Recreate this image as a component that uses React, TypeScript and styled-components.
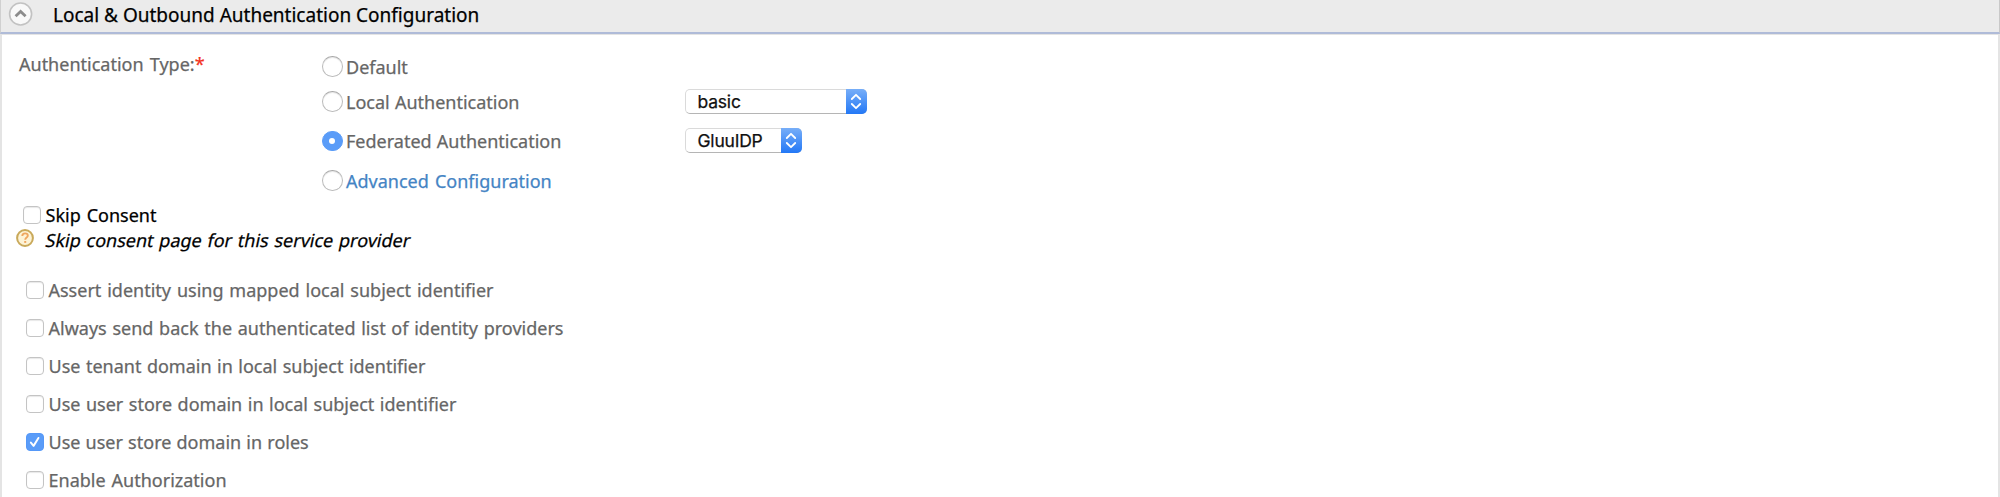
import React from "react";
import styled, { createGlobalStyle } from "styled-components";

const GlobalStyle = createGlobalStyle`
  * { box-sizing: border-box; }
  body {
    margin: 0;
    background: #fff;
    overflow: hidden;
    font-family: "Noto Sans", "Open Sans", sans-serif;
    font-size: 18px;
    color: #666;
    -webkit-text-stroke: 0.25px currentColor;
  }
`;

const Section = styled.section`
  width: 100%;
  height: 497px;
  overflow: hidden;
`;

const SectionHeader = styled.header`
  display: flex;
  align-items: flex-start;
  height: 34px;
  background: #ebebeb;
  border-bottom: 2px solid #afbbd8;
  border-left: 1px solid #d0d0d0;
  border-right: 1px solid #c8c8c8;
`;

const ToggleIcon = styled.svg`
  flex: none;
  width: 26px;
  height: 28px;
  margin-left: 7px;
`;

const SectionTitle = styled.h2`
  margin: 0 0 0 19px;
  font-size: 19px;
  font-weight: 400;
  line-height: 30px;
  color: #000;
  white-space: pre;
`;

const SectionBody = styled.div`
  height: 463px;
  border: solid #e4e4e4;
  border-width: 1px 2px 0;
`;

const AuthType = styled.div`
  display: flex;
  padding-top: 14px;
`;

const FieldLabel = styled.div`
  width: 304px;
  padding-left: 17px;
  line-height: 30px;
  word-spacing: 1.5px;
  white-space: pre;
`;

const Required = styled.span`
  color: #f3301c;
`;

const OptionList = styled.div`
  flex: 1;
`;

const OptionRow = styled.label<{ $height: number }>`
  display: flex;
  align-items: center;
  height: ${(p) => p.$height}px;
  padding-left: 16px;
`;

const Radio = styled.span<{ $checked?: boolean }>`
  display: flex;
  align-items: center;
  justify-content: center;
  flex: none;
  width: 20.5px;
  height: 20.5px;
  border-radius: 50%;
  border: 1px solid ${(p) => (p.$checked ? "#5a9cf8" : "#bdbdbd")};
  border-top-color: ${(p) => (p.$checked ? "#5a9cf8" : "#a9a9a9")};
  background: ${(p) => (p.$checked ? "#5a9cf8" : "#fff")};
  box-shadow: ${(p) => (p.$checked ? "none" : "inset 0 1px 1px #e6e6e6")};

  &::after {
    content: "";
    width: 6px;
    height: 6px;
    border-radius: 50%;
    background: #fff;
  }
`;

const OptionText = styled.span<{ $link?: boolean }>`
  width: 338.5px;
  margin-left: 3.5px;
  word-spacing: ${(p) => (p.$link ? 1.5 : 0.5)}px;
  color: ${(p) => (p.$link ? "#4484c4" : "inherit")};
  white-space: pre;
`;

const SelectBox = styled.span<{ $width: number }>`
  display: flex;
  justify-content: space-between;
  width: ${(p) => p.$width}px;
  height: 25px;
  margin-bottom: 1px;
  border: 1px solid #dadada;
  border-bottom-color: #b5b5b5;
  border-radius: 5px;
  background: #fff;
  font-family: Inter, sans-serif;
  font-size: 17.5px;
  line-height: 24px;
  letter-spacing: -0.2px;
  color: #111;
  padding-left: 12px;
`;

const SelectArrows = styled.span`
  display: flex;
  align-items: center;
  justify-content: center;
  width: 21px;
  height: 25px;
  margin: -1px -1px 0 0;
  border-radius: 0 5px 5px 0;
  background: linear-gradient(#77aef8, #2378f6);
`;

const SkipRow = styled.label`
  display: flex;
  align-items: center;
  height: 24px;
  margin-top: 5px;
  padding-left: 21px;
  color: #000;
`;

const HelpRow = styled.div`
  display: flex;
  align-items: flex-start;
  height: 44px;
  padding-left: 14px;
  line-height: 26px;
  color: #000;
`;

const HelpIcon = styled.svg`
  flex: none;
  width: 18px;
  height: 18px;
  margin: 2px 12px 0 0;
`;

const HelpText = styled.span`
  word-spacing: 1.1px;
  white-space: pre;
  transform: skewX(-12deg);
`;

const CheckRow = styled.label`
  display: flex;
  align-items: center;
  height: 38px;
  padding-left: 24px;
`;

const Checkbox = styled.span<{ $checked?: boolean }>`
  display: flex;
  flex: none;
  width: 17.5px;
  height: 17.5px;
  border-radius: 4px;
  border: 1px solid ${(p) => (p.$checked ? "#5598f8" : "#c4c4c4")};
  background: ${(p) => (p.$checked ? "#5a9cf8" : "#fff")};
  box-shadow: ${(p) => (p.$checked ? "none" : "inset 0 1px 1px #e8e8e8")};
`;

const CheckText = styled.span<{ $spacing: number }>`
  margin-left: 5px;
  word-spacing: ${(p) => p.$spacing}px;
  white-space: pre;
`;

const checks = [
  { label: "Assert identity using mapped local subject identifier", spacing: 1.2 },
  { label: "Always send back the authenticated list of identity providers", spacing: 1.05 },
  { label: "Use tenant domain in local subject identifier", spacing: 0.8 },
  { label: "Use user store domain in local subject identifier", spacing: 0.85 },
  { label: "Use user store domain in roles", spacing: 0.5, checked: true },
  { label: "Enable Authorization", spacing: 1.3 },
];

function Select({ value, width }: { value: string; width: number }) {
  return (
    <SelectBox $width={width}>
      {value}
      <SelectArrows>
        <svg width="12" height="17" viewBox="0 0 12 17" fill="none" stroke="#fff" strokeWidth="1.8" strokeLinecap="round" strokeLinejoin="round">
          <path d="M1.8 6 6 1.8 10.2 6M1.8 11 6 15.2 10.2 11" />
        </svg>
      </SelectArrows>
    </SelectBox>
  );
}

export default function App() {
  return (
    <>
      <GlobalStyle />
      <Section>
        <SectionHeader>
          <ToggleIcon viewBox="0 0 26 28" fill="none">
            <circle cx="12.6" cy="14" r="11" fill="#f9f9f9" stroke="#c2c2c2" strokeWidth="1.6" />
            <path d="M7.6 16.2 12.6 11.4 17.6 16.2" stroke="#8c8c8c" strokeWidth="2.8" />
          </ToggleIcon>
          <SectionTitle>Local &amp; Outbound Authentication Configuration</SectionTitle>
        </SectionHeader>
        <SectionBody>
          <AuthType>
            <FieldLabel>
              Authentication Type:<Required>*</Required>
            </FieldLabel>
            <OptionList>
              <OptionRow $height={35}>
                <Radio />
                <OptionText>Default</OptionText>
              </OptionRow>
              <OptionRow $height={35}>
                <Radio />
                <OptionText>Local Authentication</OptionText>
                <Select value="basic" width={182} />
              </OptionRow>
              <OptionRow $height={44}>
                <Radio $checked />
                <OptionText>Federated Authentication</OptionText>
                <Select value="GluuIDP" width={117} />
              </OptionRow>
              <OptionRow $height={35}>
                <Radio />
                <OptionText $link>Advanced Configuration</OptionText>
              </OptionRow>
            </OptionList>
          </AuthType>
          <SkipRow>
            <Checkbox />
            <CheckText $spacing={1.3}>Skip Consent</CheckText>
          </SkipRow>
          <HelpRow>
            <HelpIcon viewBox="0 0 18 18" fill="none">
              <circle cx="9" cy="9" r="7.9" fill="#fdf3d6" stroke="#c9a95a" strokeWidth="2" />
              <path d="M6.3 7.1C6.3 5.2 7.5 4.4 9.1 4.4s2.7.9 2.7 2.3c0 1.8-2.6 1.8-2.6 4" stroke="#efa65f" strokeWidth="1.9" />
              <path d="M8.2 12h2v1.9h-2z" fill="#efa65f" />
            </HelpIcon>
            <HelpText>Skip consent page for this service provider</HelpText>
          </HelpRow>
          {checks.map((item) => (
            <CheckRow key={item.label}>
              <Checkbox $checked={item.checked}>
                {item.checked && (
                  <svg width="16" height="16" viewBox="0 0 16 16" fill="none" stroke="#fff" strokeWidth="2" strokeLinecap="round" strokeLinejoin="round">
                    <path d="M4 8.6 6.8 12 11.8 3.8" />
                  </svg>
                )}
              </Checkbox>
              <CheckText $spacing={item.spacing}>{item.label}</CheckText>
            </CheckRow>
          ))}
        </SectionBody>
      </Section>
    </>
  );
}
